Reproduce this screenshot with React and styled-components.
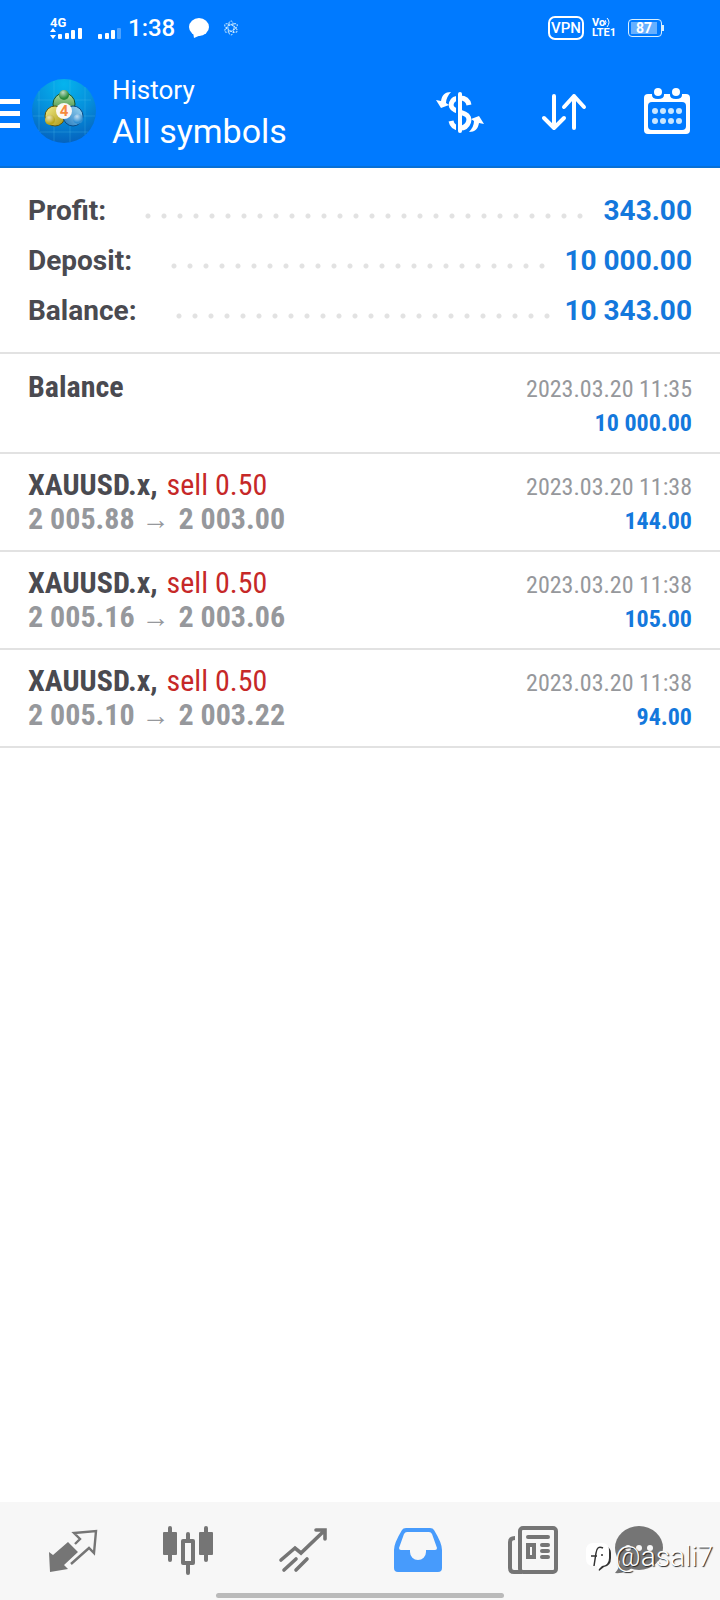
import styled, { createGlobalStyle } from "styled-components";

const summary = [
  { label: "Profit:", value: "343.00" },
  { label: "Deposit:", value: "10 000.00" },
  { label: "Balance:", value: "10 343.00" },
];

const deals = [
  { name: "Balance", date: "2023.03.20 11:35", amount: "10 000.00" },
  { name: "XAUUSD.x,", side: "sell 0.50", open: "2 005.88", close: "2 003.00", date: "2023.03.20 11:38", amount: "144.00" },
  { name: "XAUUSD.x,", side: "sell 0.50", open: "2 005.16", close: "2 003.06", date: "2023.03.20 11:38", amount: "105.00" },
  { name: "XAUUSD.x,", side: "sell 0.50", open: "2 005.10", close: "2 003.22", date: "2023.03.20 11:38", amount: "94.00" },
];

const tabs = [
  { label: "Quotes", Icon: QuotesIcon },
  { label: "Chart", Icon: CandlesIcon },
  { label: "Trade", Icon: TrendIcon },
  { label: "History", Icon: InboxIcon, active: true },
  { label: "News", Icon: NewsIcon },
  { label: "Chat", Icon: ChatIcon },
];

function MobileSignal() {
  return (
    <svg width="32" height="11" viewBox="0 0 32 11" fill="#fff">
      <path d="M3 0l3 4H0zM3 11l3-4H0z" />
      <rect x="8" y="6" width="4" height="5" rx="1" />
      <rect x="15" y="5" width="4" height="6" rx="1" />
      <rect x="21" y="2" width="4" height="9" rx="1" />
      <rect x="28" y="0" width="4" height="11" rx="1" />
    </svg>
  );
}

function SecondSignal() {
  return (
    <svg width="24" height="11" viewBox="0 0 24 11" fill="#fff">
      <rect x="0" y="6" width="4" height="5" rx="1" />
      <rect x="7" y="5" width="4" height="6" rx="1" />
      <rect x="13" y="2" width="4" height="9" rx="1" />
      <rect x="19" y="0" width="4" height="11" rx="1" opacity=".3" />
    </svg>
  );
}

function BubbleIcon() {
  return (
    <svg width="20" height="20" viewBox="0 0 20 20" fill="#fff">
      <ellipse cx="10" cy="9" rx="10" ry="9" />
      <path d="M4 14l1 6 7-3z" />
    </svg>
  );
}

function AtomIcon() {
  return (
    <svg width="16" height="16" viewBox="0 0 16 16" fill="none" stroke="#d5f0ff" strokeDasharray="2 1">
      <ellipse cx="8" cy="8" rx="3" ry="7" />
      <ellipse cx="8" cy="8" rx="3" ry="7" transform="rotate(60 8 8)" />
      <ellipse cx="8" cy="8" rx="3" ry="7" transform="rotate(120 8 8)" />
    </svg>
  );
}

function WaveIcon() {
  return (
    <svg width="5" height="9" viewBox="0 0 5 9" fill="none" stroke="#fff">
      <path d="M0 2q2 2 0 5M2 0q4 4 0 9" />
    </svg>
  );
}

function AppLogo() {
  return (
    <svg width="64" height="64" viewBox="0 0 64 64">
      <defs>
        <radialGradient id="sky" cx="50%" cy="8%" r="95%">
          <stop offset="0" stopColor="#05b4ee" />
          <stop offset=".5" stopColor="#0590dc" />
          <stop offset="1" stopColor="#0560bc" />
        </radialGradient>
        <linearGradient id="green" x1="0" y1="0" x2="0" y2="1">
          <stop offset="0" stopColor="#b5dfa0" />
          <stop offset="1" stopColor="#237a34" />
        </linearGradient>
        <linearGradient id="yellow" x1="0" y1="0" x2="1" y2="1">
          <stop offset="0" stopColor="#f4ee8c" />
          <stop offset="1" stopColor="#a99512" />
        </linearGradient>
        <linearGradient id="blue" x1="1" y1="0" x2="0" y2="1">
          <stop offset="0" stopColor="#a5dcf5" />
          <stop offset="1" stopColor="#1c75bd" />
        </linearGradient>
        <radialGradient id="shine" cx="40%" cy="25%" r="60%">
          <stop offset="0" stopColor="#fff" stopOpacity=".7" />
          <stop offset="1" stopColor="#fff" stopOpacity="0" />
        </radialGradient>
      </defs>
      <circle cx="32" cy="32" r="32" fill="url(#sky)" />
      <path d="M7 12v40M22 2v60M38 1v62M53 8v48M5 21h54M1 37h62M8 53h48" stroke="#5cc6f2" strokeOpacity=".25" />
      <circle cx="32" cy="25" r="11" fill="url(#green)" stroke="#14532a" />
      <circle cx="23" cy="37" r="10" fill="url(#yellow)" stroke="#5f560f" />
      <circle cx="41" cy="37" r="10" fill="url(#blue)" stroke="#0d4c86" />
      {[[32, 16, "#2a8a3b"], [18, 41, "#b9a61c"], [46, 40, "#2f8ed2"]].map(([x, y, fill]) => (
        <g key={fill}>
          <circle cx={x} cy={y} r="5" fill={fill} />
          <circle cx={x} cy={y} r="5" fill="url(#shine)" />
        </g>
      ))}
      <circle cx="32" cy="32" r="8" fill="#fbf7f2" />
      <text x="32" y="37" textAnchor="middle" fontFamily="Roboto, sans-serif" fontSize="15" fontWeight="700" fill="#f58a3c">4</text>
    </svg>
  );
}

function DollarIcon() {
  return (
    <svg width="48" height="48" viewBox="0 0 48 48" fill="none">
      <path d="M33 18c-1-5-4-7-9-7-9 0-12 9-5 12l10 4c7 3 4 14-5 14-5 0-8-2-9-7" stroke="#fff" strokeWidth="5" />
      <path d="M21 6v38" stroke="#007aff" strokeWidth="2" />
      <path d="M24 7v37" stroke="#fff" strokeWidth="4" strokeLinecap="round" />
      <path d="M15 5C9 5 6 8 5 14l-5-1 5 8 8-3-3-2c0-4 2-8 5-11z" fill="#fff" />
      <path d="M33 45c6 0 9-3 10-9l5 1-5-8-8 3 3 2c0 4-2 8-5 11z" fill="#fff" />
    </svg>
  );
}

function SortIcon() {
  return (
    <svg width="48" height="48" viewBox="0 0 48 48" fill="none" stroke="#fff" strokeWidth="4" strokeLinecap="round" strokeLinejoin="round">
      <path d="M14 9v32M4 31l10 10 10-10" />
      <path d="M34 41V9M24 20L34 9l10 11" />
    </svg>
  );
}

function CalendarIcon() {
  return (
    <svg width="48" height="48" viewBox="0 0 48 48">
      <rect x="0" y="7" width="46" height="40" rx="4" fill="#fff" />
      <rect x="4" y="15" width="38" height="28" rx="4" fill="#007aff" />
      <path d="M8 7v1q0 4 6 4t6-4V7zM26 7v1q0 4 6 4t6-4V7z" fill="#007aff" />
      <circle cx="14" cy="5" r="4" fill="#fff" />
      <circle cx="32" cy="5" r="4" fill="#fff" />
      {[24, 34].map((y) => [11, 19, 27, 35].map((x) => (
        <circle key={`${x}-${y}`} cx={x} cy={y} r="3" fill="#c8e6ff" />
      )))}
    </svg>
  );
}

function QuotesIcon() {
  return (
    <TabSvg viewBox="0 0 48 48">
      <path d="M0 26l4 3 15-13 10 10-14 13 4 4-18 3z" fill="currentColor" />
      <path d="M22 38l18-16 5 5 2-22-22 2 6 6-5 5" fill="none" stroke="currentColor" strokeWidth="2.4" />
    </TabSvg>
  );
}

function CandlesIcon() {
  return (
    <TabSvg viewBox="0 0 48 48">
      <path d="M6 2v32M24 8v8M24 38v9M42 2v32" stroke="currentColor" strokeWidth="4" strokeLinecap="round" />
      <rect x="-1" y="6" width="14" height="23" rx="1" fill="currentColor" />
      <rect x="35" y="6" width="14" height="23" rx="1" fill="currentColor" />
      <rect x="19" y="15" width="10" height="22" fill="#f7f7f7" stroke="currentColor" strokeWidth="4" strokeLinejoin="round" />
    </TabSvg>
  );
}

function TrendIcon() {
  return (
    <TabSvg viewBox="0 0 48 48" fill="none" stroke="currentColor" strokeWidth="3.6" strokeLinecap="round">
      <path d="M2 34l14-12 6 5L45 5M37 4h9v9" />
      <path d="M5 44l12-11M17 44l11-11" />
    </TabSvg>
  );
}

function InboxIcon() {
  return (
    <TabSvg viewBox="0 0 48 48">
      <path
        fill="currentColor"
        fillRule="evenodd"
        d="M12 2h24q3 0 4 2 8 13 8 20v18q0 4-4 4H4q-4 0-4-4V24Q0 17 8 4q1-2 4-2zM13 6q-2 0-3 2L5 22q0 2 2 2h9v2a8 8 0 0 0 16 0v-2h9q2 0 2-2L38 8q-1-2-3-2z"
      />
    </TabSvg>
  );
}

function NewsIcon() {
  return (
    <TabSvg viewBox="0 0 48 48" fill="none" stroke="currentColor" strokeWidth="4">
      <rect x="11" y="2" width="36" height="44" rx="3" />
      <path d="M6 12q-5 0-5 4v26q0 4 4 4h8" />
      <path d="M19 11h20M33 19h6M33 25h6M33 31h6" strokeLinecap="round" />
      <rect x="19" y="19" width="6" height="12" />
    </TabSvg>
  );
}

function ChatIcon() {
  return (
    <TabSvg viewBox="9 0 48 48">
      <ellipse cx="24" cy="22" rx="24" ry="22" fill="currentColor" />
      <path d="M5 34q0 8-5 13 10 1 18-6z" fill="currentColor" />
      <circle cx="13" cy="22" r="3" fill="#f7f7f7" />
      <circle cx="24" cy="22" r="3" fill="#f7f7f7" />
      <circle cx="35" cy="22" r="3" fill="#f7f7f7" />
    </TabSvg>
  );
}

function StampIcon() {
  return (
    <svg width="26" height="30" viewBox="0 0 26 30">
      <path d="M20 4q5 2 5 7v5q0 8-7 9l-5 4-1-4z" fill="#333" />
      <path d="M7 1h9q7 0 7 8v7q0 7-7 8l-4 4-1-4H7q-7 0-7-8V9q0-8 7-8z" fill="#fff" />
      <path d="M17 6q-6-3-7 5L8 24M5 14h6" fill="none" stroke="#333" strokeWidth="1.5" />
      <circle cx="16" cy="13" r="1" fill="#333" />
    </svg>
  );
}

function StatusBar() {
  return (
    <Status>
      <Network>
        <NetworkName>4G</NetworkName>
        <MobileSignal />
      </Network>
      <SecondSlot><SecondSignal /></SecondSlot>
      <Clock>1:38</Clock>
      <BubbleIcon />
      <AtomIcon />
      <Spacer />
      <Vpn>VPN</Vpn>
      <Volte>
        <span>Vo<WaveIcon /></span>
        <span>LTE1</span>
      </Volte>
      <Battery><Charge>87</Charge></Battery>
    </Status>
  );
}

function Deal({ name, side, open, close, date, amount }) {
  return (
    <DealItem>
      <Line>
        <Name>{name}{side && <Side> {side}</Side>}</Name>
        <DateText>{date}</DateText>
      </Line>
      <Line>
        <Prices>{open ? <>{open} <Arrow>→</Arrow> {close}</> : "\u00a0"}</Prices>
        <Amount>{amount}</Amount>
      </Line>
    </DealItem>
  );
}

export default function App() {
  return (
    <Page>
      <GlobalStyle />
      <Header>
        <StatusBar />
        <Toolbar>
          <MenuButton aria-label="Menu"><Bar /><Bar /><Bar /></MenuButton>
          <AppLogo />
          <Titles>
            <Title>History</Title>
            <Subtitle>All symbols</Subtitle>
          </Titles>
          <Actions>
            <IconButton aria-label="Currency"><DollarIcon /></IconButton>
            <IconButton aria-label="Sort"><SortIcon /></IconButton>
            <IconButton aria-label="Period"><CalendarIcon /></IconButton>
          </Actions>
        </Toolbar>
      </Header>

      <Main>
        <Summary>
          {summary.map(({ label, value }) => (
            <SummaryRow key={label}>
              <dt>{label}</dt>
              <Leader aria-hidden="true" />
              <SummaryValue>{value}</SummaryValue>
            </SummaryRow>
          ))}
        </Summary>
        <DealList>
          {deals.map((deal, index) => <Deal key={index} {...deal} />)}
        </DealList>
      </Main>

      <BottomNav>
        <Tabs>
          {tabs.map(({ label, Icon, active }) => (
            <Tab key={label} aria-label={label} $active={active}><Icon /></Tab>
          ))}
        </Tabs>
        <HomeBar />
        <Stamp><StampIcon />@asali7</Stamp>
      </BottomNav>
    </Page>
  );
}

const GlobalStyle = createGlobalStyle`
  * {
    box-sizing: border-box;
  }
  body {
    margin: 0;
    background: #fff;
    font-family: Roboto, "Liberation Sans", sans-serif;
  }
  h1, h2, p, dl, dd, ul {
    margin: 0;
    padding: 0;
    font-weight: 400;
  }
  button {
    padding: 0;
    border: 0;
    background: none;
    cursor: pointer;
  }
  svg {
    display: block;
    flex: none;
  }
`
const Page = styled.div`
  min-height: 100vh;
  display: flex;
  flex-direction: column;
`
const Header = styled.header`
  background: #007aff;
  border-bottom: 2px solid #0870d6;
  color: #fff;
`
const Status = styled.div`
  height: 56px;
  padding: 0 58px 0 50px;
  display: flex;
  align-items: center;
`
const Network = styled.div`
  display: flex;
  flex-direction: column;
`
const NetworkName = styled.span`
  font-size: 13px;
  font-weight: 700;
  line-height: 10px;
`
const SecondSlot = styled.div`
  padding-top: 10px;
  margin: 0 6px 0 16px;
`
const Clock = styled.time`
  margin-right: 14px;
  font-size: 24px;
  font-weight: 500;
  line-height: 28px;
  & + svg {
    margin-right: 14px;
  }
`
const Spacer = styled.div`
  flex: 1;
`
const Vpn = styled.span`
  width: 36px;
  height: 24px;
  border: 2px solid #fff;
  border-radius: 7px;
  font-size: 15px;
  font-weight: 500;
  line-height: 20px;
  display: flex;
  justify-content: center;
`
const Volte = styled.div`
  width: 24px;
  margin: 0 12px 0 8px;
  font-size: 11px;
  font-weight: 700;
  line-height: 10px;
  span {
    display: flex;
  }
`
const Battery = styled.div`
  position: relative;
  width: 34px;
  height: 18px;
  padding: 2px;
  border: 1px solid #d8efff;
  border-radius: 4px;
  &::after {
    content: "";
    position: absolute;
    top: 5px;
    right: -3px;
    width: 2px;
    height: 6px;
    background: #d8efff;
  }
`
const Charge = styled.div`
  width: 26px;
  background: #66b0ff;
  font-size: 14px;
  font-weight: 700;
  line-height: 12px;
  text-align: center;
`
const Toolbar = styled.div`
  height: 110px;
  padding-right: 28px;
  display: flex;
  align-items: center;
`
const MenuButton = styled.button`
  width: 20px;
  margin-right: 12px;
  padding-top: 4px;
  display: flex;
  flex-direction: column;
  gap: 7px;
`
const Bar = styled.span`
  width: 100%;
  height: 5px;
  background: #fff;
`
const Titles = styled.div`
  flex: 1;
  margin-left: 16px;
`
const Title = styled.h1`
  font-size: 26px;
  line-height: 40px;
`
const Subtitle = styled.h2`
  font-size: 34px;
  line-height: 42px;
`
const Actions = styled.div`
  display: flex;
  gap: 56px;
`
const IconButton = styled.button`
  width: 48px;
  height: 48px;
`
const Main = styled.main`
  flex: 1;
`
const Summary = styled.dl`
  padding: 18px 28px 16px;
  border-bottom: 2px solid #e2e2e2;
`
const SummaryRow = styled.div`
  display: flex;
  color: #4a4a50;
  font-size: 28px;
  font-weight: 700;
  line-height: 50px;
`
const Leader = styled.span`
  flex: 1;
  height: 16px;
  margin: 22px 14px 0 39px;
  background: radial-gradient(circle at 3px 8px, #e2e2e2 2px, transparent 3px) 0 0 / 16px 16px repeat-x;
`
const SummaryValue = styled.dd`
  font-weight: 700;
  color: #1478dc;
`
const DealList = styled.ul`
  list-style: none;
  font-family: "Roboto Condensed", Roboto, sans-serif;
`
const DealItem = styled.li`
  padding: 14px 28px;
  border-bottom: 2px solid #e2e2e2;
  &:first-child {
    padding-top: 16px;
  }
`
const Line = styled.div`
  height: 34px;
  display: flex;
  justify-content: space-between;
  align-items: baseline;
  line-height: 34px;
`
const Name = styled.p`
  color: #4a4a50;
  font-size: 30px;
  font-weight: 700;
`
const Side = styled.span`
  margin-left: 2px;
  color: #c62828;
  font-weight: 400;
`
const Prices = styled.p`
  color: #96989c;
  font-size: 30px;
  font-weight: 700;
`
const Arrow = styled.span`
  margin-right: 2px;
  font-family: "Liberation Sans", sans-serif;
  font-size: 28px;
`
const DateText = styled.time`
  color: #96989c;
  font-size: 24px;
`
const Amount = styled.p`
  color: #1478dc;
  font-size: 24px;
  font-weight: 700;
`
const BottomNav = styled.nav`
  position: relative;
  padding-bottom: 2px;
  background: #f7f7f7;
`
const Tabs = styled.div`
  padding: 24px 15px 19px;
  display: flex;
`
const Tab = styled.button`
  flex: 1;
  display: flex;
  justify-content: center;
  color: ${({ $active }) => $active ? "#479bfc" : "#757575"};
`
const TabSvg = styled.svg`
  width: 48px;
  height: 48px;
  overflow: visible;
`
const HomeBar = styled.div`
  width: 40%;
  height: 5px;
  margin: 0 auto;
  border-radius: 3px;
  background: #bababa;
`
const Stamp = styled.div`
  position: absolute;
  right: 7px;
  bottom: 27px;
  display: flex;
  align-items: center;
  gap: 3px;
  color: #fff;
  font-size: 28px;
  font-weight: 300;
  line-height: 32px;
  text-shadow: 1px 1px 1px #222;
`
